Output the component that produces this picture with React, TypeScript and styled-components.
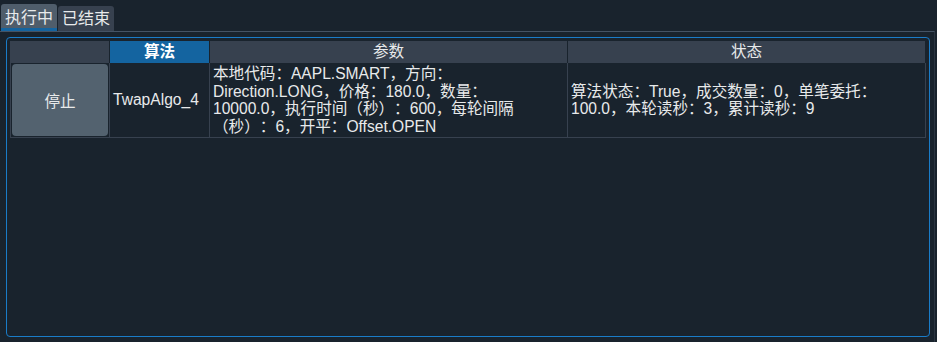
import React, { useState } from "react";
import styled, { createGlobalStyle } from "styled-components";

const GlobalStyle = createGlobalStyle`
    html, body {
        margin: 0;
        padding: 0;
        background: #19232d;
    }
    body {
        font-family: "Liberation Sans", "Noto Sans CJK SC", sans-serif;
        color: #e8eaeb;
        text-spacing-trim: space-all;
    }
`;

const Page = styled.div`
    width: 937px;
    height: 342px;
    display: flex;
    flex-direction: column;
    box-sizing: border-box;
`;

const TabBar = styled.div`
    display: flex;
    align-items: flex-end;
    padding: 4px 0 0 1px;
    gap: 1px;
`;

const Tab = styled.div<{ $active?: boolean }>`
    height: ${(p) => (p.$active ? "24px" : "22px")};
    padding: 0 4px;
    display: flex;
    align-items: center;
    font-size: 16px;
    background: ${(p) => (p.$active ? "#4f5d6b" : "#37414f")};
    border-bottom: 3px solid ${(p) => (p.$active ? "#1464a0" : "#37414f")};
    border-radius: 3px 3px 0 0;
    cursor: pointer;
`;

const Pane = styled.div`
    flex: 1;
    border-top: 1px solid #455364;
    border-right: 1px solid #2b3541;
    margin-right: 2px;
    padding: 5px 4px 5px 6px;
    display: flex;
`;

const Frame = styled.div`
    flex: 1;
    border: 1px solid #1a7cc8;
    border-radius: 4px;
    padding: 3px;
    display: flex;
`;

const Table = styled.div`
    flex: 1;
    display: grid;
    grid-template-columns: 100px 100px 1fr 1fr;
    grid-template-rows: 22px 75px;
    align-content: start;
    font-size: 15.6px;
    line-height: 17.5px;
`;

const HeadCell = styled.div<{ $selected?: boolean }>`
    background: ${(p) => (p.$selected ? "#1464a0" : "#37414f")};
    border-right: 1px solid #19232d;
    display: flex;
    align-items: center;
    justify-content: center;
    font-weight: ${(p) => (p.$selected ? "bold" : "normal")};
    color: ${(p) => (p.$selected ? "#ffffff" : "#e8eaeb")};
`;

const Cell = styled.div`
    border-right: 1px solid #37414f;
    border-bottom: 1px solid #37414f;
    display: flex;
    align-items: center;
    padding: 0 3px;
    box-sizing: border-box;
    white-space: nowrap;
`;

const ButtonCell = styled(Cell)`
    padding: 1px;
    align-items: stretch;
    border-left: 1px solid #37414f;
`;

const StopButton = styled.button`
    flex: 1;
    border: none;
    border-radius: 4px;
    background: #53626f;
    color: #e8eaeb;
    font-family: inherit;
    font-size: 15.6px;
    cursor: pointer;
`;

const CellText = styled.span`
    display: block;
    width: 100%;
`;

interface IAlgo {
    name: string;
    parameters: string[];
    variables: string[];
}

const algos: IAlgo[] = [
    {
        name: "TwapAlgo_4",
        parameters: [
            "本地代码：AAPL.SMART，方向：",
            "Direction.LONG，价格：180.0，数量：",
            "10000.0，执行时间（秒）：600，每轮间隔",
            "（秒）：6，开平：Offset.OPEN",
        ],
        variables: ["算法状态：True，成交数量：0，单笔委托：", "100.0，本轮读秒：3，累计读秒：9"],
    },
];

export default function App() {
    const [tab, setTab] = useState(0);

    return (
        <>
            <GlobalStyle />
            <Page>
                <TabBar>
                    <Tab $active={tab === 0} onClick={() => setTab(0)}>执行中</Tab>
                    <Tab $active={tab === 1} onClick={() => setTab(1)}>已结束</Tab>
                </TabBar>
                <Pane>
                    <Frame>
                        <Table>
                            <HeadCell />
                            <HeadCell $selected>算法</HeadCell>
                            <HeadCell>参数</HeadCell>
                            <HeadCell>状态</HeadCell>
                            {algos.map((algo) => (
                                <React.Fragment key={algo.name}>
                                    <ButtonCell>
                                        <StopButton>停止</StopButton>
                                    </ButtonCell>
                                    <Cell>{algo.name}</Cell>
                                    <Cell>
                                        <CellText>
                                            {algo.parameters.map((line) => (
                                                <div key={line}>{line}</div>
                                            ))}
                                        </CellText>
                                    </Cell>
                                    <Cell>
                                        <CellText>
                                            {algo.variables.map((line) => (
                                                <div key={line}>{line}</div>
                                            ))}
                                        </CellText>
                                    </Cell>
                                </React.Fragment>
                            ))}
                        </Table>
                    </Frame>
                </Pane>
            </Page>
        </>
    );
}
